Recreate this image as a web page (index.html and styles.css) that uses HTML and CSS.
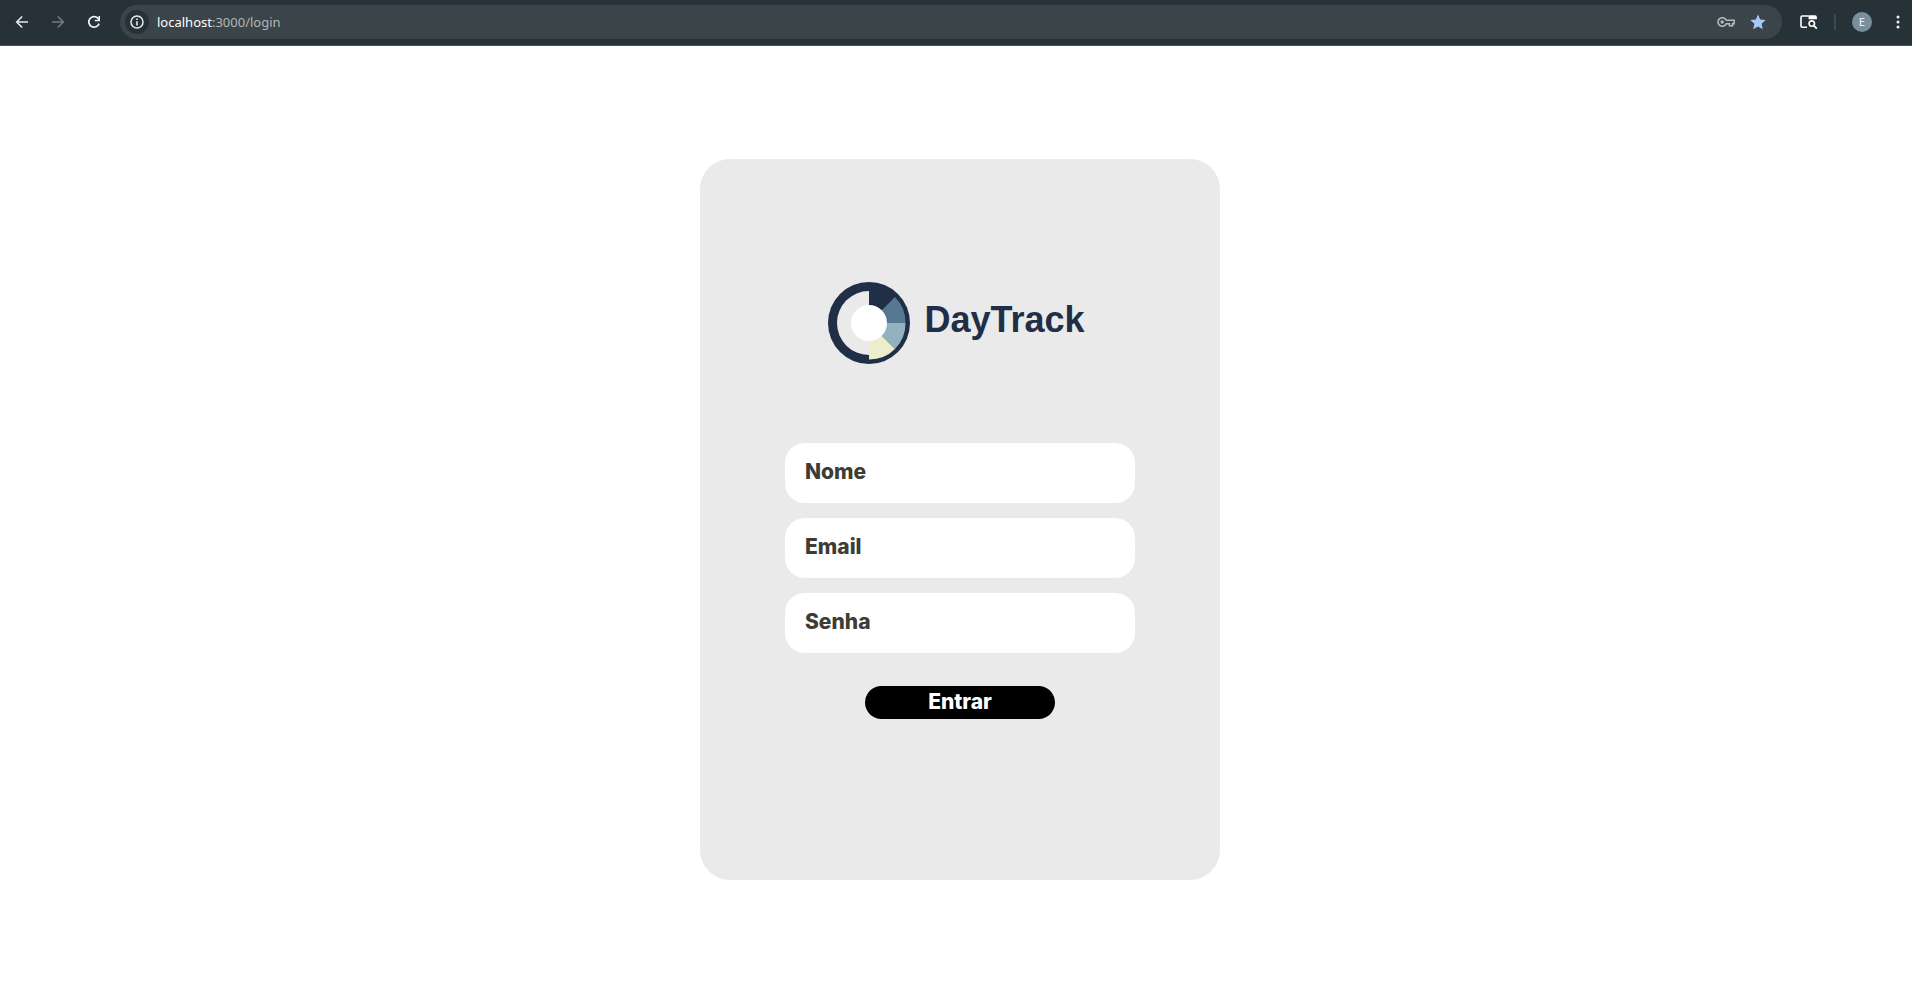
FILE: index.html
```html
<!DOCTYPE html>
<html lang="pt-BR">
<head>
<meta charset="utf-8">
<title>DayTrack</title>
<link rel="stylesheet" href="styles.css">
</head>
<body>
<header class="toolbar">
  <nav class="nav">
    <button class="icon-button" aria-label="Voltar"><svg width="14" height="14" viewBox="0 0 14 14"><path d="M13 7H2M7.2 1.5 1.7 7 7.2 12.5" fill="none" stroke="#e6e9ea" stroke-width="1.6"/></svg></button>
    <button class="icon-button" aria-label="Avançar"><svg width="14" height="14" viewBox="0 0 14 14"><path d="M1 7h11M6.8 1.5 12.3 7 6.8 12.5" fill="none" stroke="#737b80" stroke-width="1.6"/></svg></button>
    <button class="icon-button" aria-label="Recarregar"><svg width="14" height="14" viewBox="0 0 14 14"><path d="M12.1 8.6A5.3 5.3 0 1 1 10.9 3.2L12 4.4" fill="none" stroke="#f1f3f3" stroke-width="1.7"/><path d="M13 1v5.2H7.8V4.7h3.7V1z" fill="#f1f3f3"/></svg></button>
  </nav>
  <div class="address">
    <button class="site-info" aria-label="Informações do site"><svg width="14" height="14" viewBox="0 0 14 14"><circle cx="7" cy="7" r="6" fill="none" stroke="#e8eaed" stroke-width="1.5"/><path d="M7 6.2v4.3M7 3.4v1.6" stroke="#e8eaed" stroke-width="1.6"/></svg></button>
    <span class="url"><span class="host">localhost</span>:3000/login</span>
    <button class="icon-button key" aria-label="Senhas"><svg width="18" height="12" viewBox="0 0 18 12"><path d="M9.2 4.2h7.9v3.6h-1.5v2h-3.2v-2H9.2A4.3 4.3 0 1 1 9.2 4.2z" fill="none" stroke="#b7bbbc" stroke-width="1.6"/><circle cx="5.2" cy="6" r="1.7" fill="#b7bbbc"/></svg></button>
    <button class="icon-button" aria-label="Favorito"><svg width="16" height="16" viewBox="0 0 16 16"><path d="m8 .5 2.2 5.1 5.5.5-4.1 3.7 1.2 5.4L8 12.4l-4.8 2.8 1.2-5.4L.3 6.1l5.5-.5z" fill="#a8c7fa"/></svg></button>
  </div>
  <div class="actions">
    <button class="icon-button" aria-label="Pesquisar guias"><svg width="19" height="16" viewBox="0 0 19 16"><path d="M8 13.2H3.2q-1.2 0-1.2-1.2V3.2Q2 2 3.2 2H9.6" fill="none" stroke="#fff" stroke-width="1.6"/><path d="M9.5 1.2H16q1.9 0 1.9 1.7v2.4H9.5z" fill="#fff"/><circle cx="12.8" cy="9.6" r="2.7" fill="none" stroke="#fff" stroke-width="1.6"/><path d="m14.6 11.4 3.2 3.2" stroke="#fff" stroke-width="1.7"/></svg></button>
    <span class="divider"></span>
    <button class="avatar" aria-label="Perfil">E</button>
    <button class="icon-button menu" aria-label="Menu"><svg width="4" height="14" viewBox="0 0 4 14" fill="#f1f3f3"><circle cx="2" cy="2" r="1.5"/><circle cx="2" cy="7" r="1.5"/><circle cx="2" cy="12" r="1.5"/></svg></button>
  </div>
</header>
<main class="page">
  <form class="card">
    <h1 class="logo">
      <svg width="84" height="84" viewBox="-42 -42 84 84" aria-hidden="true">
        <circle r="41" fill="#202e48"/>
        <path d="M0-32A32 32 0 0 0 0 32z" fill="#eaeaea"/>
        <path d="M0 0 26-26A36.5 36.5 0 0 1 36.5 0z" fill="#557992"/>
        <path d="M0 0H36.5A36.5 36.5 0 0 1 26 26z" fill="#93b2bf"/>
        <path d="M0 0 26 26A36.5 36.5 0 0 1 0 36.5z" fill="#eceecb"/>
        <circle r="18" fill="#fff"/>
      </svg>
      <span class="brand">DayTrack</span>
    </h1>
    <div class="fields">
      <input class="field" type="text" placeholder="Nome" aria-label="Nome">
      <input class="field" type="email" placeholder="Email" aria-label="Email">
      <input class="field" type="password" placeholder="Senha" aria-label="Senha">
    </div>
    <button class="submit" type="submit">Entrar</button>
  </form>
</main>
</body>
</html>
```
FILE: styles.css
```css
* { box-sizing: border-box; }

body {
  margin: 0;
  min-height: 100vh;
  display: flex;
  flex-direction: column;
  background: #fff;
  font-family: Inter, "Open Sans", sans-serif;
}

button {
  border: 0;
  padding: 0;
  background: none;
  color: inherit;
  font: inherit;
  cursor: pointer;
}

.toolbar {
  display: flex;
  align-items: center;
  height: 46px;
  padding: 0 2px 2px 4px;
  background: #273238;
  border-bottom: 1px solid #47545a;
}

.nav { display: flex; padding-right: 8px; }

.icon-button {
  display: flex;
  align-items: center;
  justify-content: center;
  width: 36px;
  height: 28px;
}

.address {
  flex: 1;
  display: flex;
  align-items: center;
  height: 34px;
  padding: 0 6px 0 5px;
  border-radius: 17px;
  background: #3a4449;
}

.site-info {
  display: flex;
  align-items: center;
  justify-content: center;
  width: 24px;
  height: 24px;
  border-radius: 12px;
  background: #273238;
}

.url {
  flex: 1;
  padding-left: 8px;
  color: #b2b7b9;
  font-family: "Noto Sans", "Open Sans", sans-serif;
  font-size: 13px;
  line-height: 20px;
}

.host { color: #fff; }

.key { width: 28px; }

.actions { display: flex; align-items: center; padding-left: 8px; }

.divider {
  width: 2px;
  height: 16px;
  margin: 0 16px 0 8px;
  background: #3a4a53;
}

.avatar {
  width: 20px;
  height: 20px;
  border-radius: 50%;
  background: #78909c;
  color: #fff;
  font-size: 10px;
  line-height: 20px;
}

.menu { width: 24px; margin-left: 14px; }

.page {
  flex: 1;
  display: flex;
  align-items: center;
  justify-content: center;
  padding: 9px 0 0 8px;
}

.card {
  display: flex;
  flex-direction: column;
  align-items: center;
  width: 520px;
  max-width: 100%;
  padding: 122px 32px 161px;
  border-radius: 30px;
  background: #eaeaea;
}

.logo {
  display: flex;
  align-items: center;
  gap: 13px;
  margin: 0 0 78px;
  padding-right: 8px;
}

.brand {
  padding-bottom: 6px;
  color: #202e48;
  font-family: "Liberation Sans", Arial, sans-serif;
  font-size: 36px;
  line-height: 40px;
}

.fields {
  display: flex;
  flex-direction: column;
  gap: 15px;
  width: 350px;
  max-width: 100%;
}

.field {
  width: 100%;
  height: 60px;
  padding: 0 20px 4px;
  border: 0;
  border-radius: 20px;
  background: #fff;
  color: #3d3d36;
  font-family: inherit;
  font-size: 21px;
  font-weight: 800;
}

.field::placeholder { color: #3d3d36; opacity: 1; }

.submit {
  width: 190px;
  height: 33px;
  margin-top: 33px;
  padding-bottom: 2px;
  border-radius: 17px;
  background: #000;
  color: #fff;
  font-size: 21px;
  font-weight: 800;
}
```
